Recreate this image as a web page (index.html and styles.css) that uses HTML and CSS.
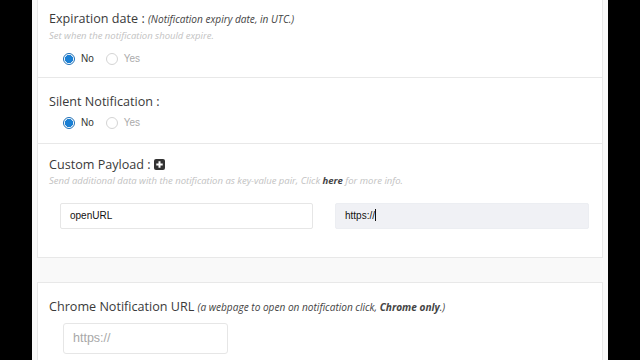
FILE: index.html
```html
<!DOCTYPE html>
<html lang="en-US">
<head>
    <meta charset="UTF-8">
    <meta name="viewport" content="width=device-width">
    <title>Notification options</title>
  <link rel="stylesheet" href="styles.css">
</head>

<body>
<div class=page>

<div class=card>
  <div class="section first">
    <p class=title>Expiration date : <i class=note>(Notification expiry date, in UTC.)</i></p>
    <p class=help>Set when the notification should expire.</p>
    <div class=radios>
      <label class=on><span class=dot></span>No</label>
      <label><span class=dot></span>Yes</label>
    </div>
  </div>

  <div class="section second">
    <p class=title>Silent Notification :</p>
    <div class=radios>
      <label class=on><span class=dot></span>No</label>
      <label><span class=dot></span>Yes</label>
    </div>
  </div>

  <div class="section payload">
    <p class=title>Custom Payload :
      <svg class=plus width="11" height="11" viewBox="0 0 11 11"><rect width="11" height="11" rx="2" fill="#333"/><path d="M5.5 2.3v6.4M2.3 5.5h6.4" stroke="#fff" stroke-width="2"/></svg>
    </p>
    <p class=help>Send additional data with the notification as key-value pair, Click <b>here</b> for more info.</p>
    <div class=pair>
      <div class=field>openURL</div>
      <div class="field focus">https://<span class=caret></span></div>
    </div>
  </div>
</div>

<div class="card chrome">
  <p class=title>Chrome Notification URL <i class=note>(a webpage to open on notification click, <b>Chrome only</b>.)</i></p>
  <div class=url>https://</div>
</div>

</div>
</body>
</html>
```

FILE: styles.css
```css
body {
    margin: 0;
    background: #000;
    height: 360px;
    overflow: hidden;
}
p {
    margin: 0;
}
.page {
    margin-left: 32px;
    width: 576px;
    height: 360px;
    background: #f9f9f9;
    overflow: hidden;
}
.card {
    margin: 0 5px;
    background: #fff;
    border: 1px solid #e8e8e8;
    border-top: none;
}
.section {
    padding: 0 11px;
    border-bottom: 1px solid #e8e8e8;
}
.section.payload {
    border-bottom: none;
    padding-top: 12px;
    padding-bottom: 28px;
}
.first {
    padding-top: 9px;
    padding-bottom: 10px;
}
.second {
    padding-top: 14px;
    padding-bottom: 12px;
}
.title {
    font: 12.6px/20px "Open Sans", sans-serif;
    color: #3a3a3a;
}
.payload .title {
    line-height: 18px;
}
.note {
    font-size: 10.1px;
    color: #444;
}
.help {
    font: italic 9.5px/14px "Open Sans", sans-serif;
    color: #c2c2c2;
}
.help b {
    color: #444;
}
.plus {
    vertical-align: -1px;
}
.radios {
    display: flex;
    gap: 12px;
    margin-left: 14px;
    font: 10px/16px "Liberation Sans", Arial, sans-serif;
    color: #aaa;
}
.first .radios {
    margin-top: 8px;
}
.second .radios {
    margin-top: 3px;
}
.radios label {
    display: flex;
    align-items: center;
    gap: 6px;
}
.radios label.on {
    color: #333;
}
.dot {
    width: 12px;
    height: 12px;
    border: 1px solid #d4d4d4;
    border-radius: 50%;
    background: #fff;
    box-sizing: border-box;
}
.on .dot {
    border: 1px solid #1f6fb5;
    background: radial-gradient(circle, #1a7fd4 0 3.8px, #fff 4.4px);
}
.pair {
    display: grid;
    grid-template-columns: 253px 254px;
    gap: 22px;
    margin: 15px 0 0 11px;
}
.field {
    height: 26px;
    box-sizing: border-box;
    border: 1px solid #e6e6e6;
    padding-left: 9px;
    font: 10px/24px "Liberation Sans", Arial, sans-serif;
    color: #111;
    border-radius: 2px;
}
.field.focus {
    background: #f0f1f5;
    border-color: #eceef2;
}
.caret {
    display: inline-block;
    width: 1px;
    height: 12px;
    background: #111;
    vertical-align: -2px;
}
.chrome {
    margin-top: 24px;
    border-top: 1px solid #e8e8e8;
    padding: 14px 11px 20px;
}
.url {
    margin: 6px 0 0 14px;
    width: 165px;
    height: 31px;
    box-sizing: border-box;
    border: 1px solid #e6e6e6;
    border-radius: 3px;
    padding-left: 9px;
    font: 12.5px/29px "Liberation Sans", Arial, sans-serif;
    color: #a8a8a8;
}
```
